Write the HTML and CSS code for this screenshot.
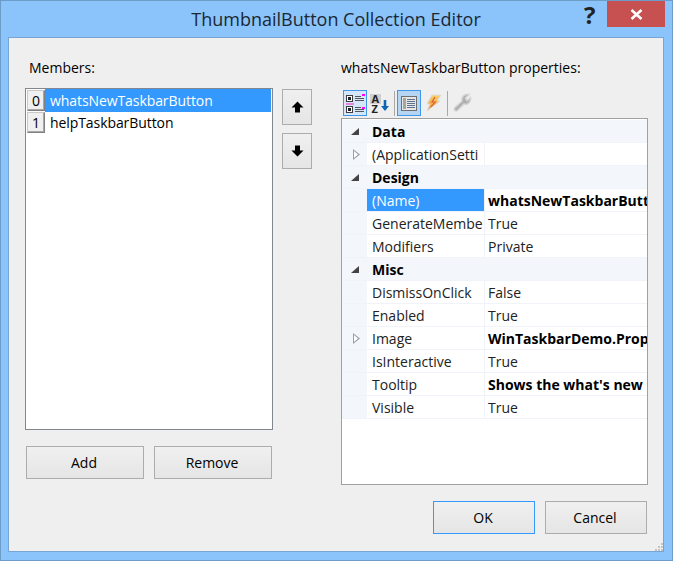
FILE: index.html
```html
<!DOCTYPE html>
<html>
    <head>
        <title>ThumbnailButton Collection Editor</title>
        <link rel="stylesheet" href="styles.css">
    </head>
    <body>
        <div class="window">
            <div class="titlebar">
                <span class="title">ThumbnailButton Collection Editor</span>
                <span class="help">?</span>
                <div class="close">
                    <svg width="13" height="11" viewBox="0 0 13 11"><path d="M1.5 1 L11.5 10 M11.5 1 L1.5 10" stroke="#fff" stroke-width="2.6" fill="none"/></svg>
                </div>
            </div>
            <div class="client">
                <div class="left">
                    <div class="label">Members:</div>
                    <div class="members-row">
                        <div class="listbox">
                            <div class="item selected"><span class="index">0</span><span class="name">whatsNewTaskbarButton</span></div>
                            <div class="item"><span class="index">1</span><span class="name">helpTaskbarButton</span></div>
                        </div>
                        <div class="move">
                            <button class="btn move-btn">
                                <svg width="13" height="12" viewBox="0 0 13 12"><path d="M6.5 0.5 L12.5 6.5 H9 V11.5 H4 V6.5 H0.5 Z" fill="#000"/></svg>
                            </button>
                            <button class="btn move-btn">
                                <svg width="13" height="12" viewBox="0 0 13 12"><path d="M6.5 11.5 L12.5 5.5 H9 V0.5 H4 V5.5 H0.5 Z" fill="#000"/></svg>
                            </button>
                        </div>
                    </div>
                    <div class="add-row">
                        <button class="btn wide">Add</button>
                        <button class="btn wide">Remove</button>
                    </div>
                </div>
                <div class="right">
                    <div class="label">whatsNewTaskbarButton properties:</div>
                    <div class="toolbar">
                        <div class="tool on light">
                            <svg width="20" height="20" viewBox="0 0 20 20">
                                <rect x="1.5" y="2.5" width="6" height="6" fill="#fff" stroke="#3c3c3c"/>
                                <rect x="3" y="4" width="3" height="3" fill="#222"/>
                                <rect x="1.5" y="13.5" width="6" height="6" fill="#fff" stroke="#3c3c3c"/>
                                <rect x="3" y="15" width="3" height="3" fill="#222"/>
                                <path d="M10 3.5H16M10 5.5H19M10 7.5H19M10 14.5H16M10 16.5H19M10 18.5H19" stroke="#555" stroke-width="1"/>
                                <rect x="17" y="1" width="3" height="2" fill="#f0f"/>
                                <rect x="1" y="10" width="8" height="2" fill="#f080e0"/>
                                <rect x="17" y="14" width="3" height="2" fill="#f0f"/>
                            </svg>
                        </div>
                        <div class="tool">
                            <svg class="sort" width="22" height="20" viewBox="0 0 22 20">
                                <rect x="2" y="1" width="11" height="10" fill="#cfcfcf"/>
                                <text x="3.5" y="10" class="az">A</text>
                                <text x="3.5" y="20" class="az">Z</text>
                                <path d="M17 7 V16" stroke="#0f66b5" stroke-width="2.6"/>
                                <path d="M13 13 L17 18 L21 13 Z" fill="#0f66b5"/>
                            </svg>
                        </div>
                        <div class="sep"></div>
                        <div class="tool on">
                            <svg width="16" height="15" viewBox="0 0 16 15">
                                <rect x="0.5" y="0.5" width="15" height="14" fill="#e6e6e6" stroke="#6f6f6f"/>
                                <rect x="2" y="2" width="3" height="11" fill="#a6a69a"/>
                                <path d="M6 3.5H14M6 5.5H14M6 7.5H14M6 9.5H14M6 11.5H14" stroke="#5f7290" stroke-width="1"/>
                            </svg>
                        </div>
                        <div class="tool">
                            <svg width="18" height="18" viewBox="0 0 18 18">
                                <defs>
                                    <linearGradient id="bolt" x1="0" y1="0" x2="0" y2="1">
                                        <stop offset="0" stop-color="#f8d46a"/>
                                        <stop offset="1" stop-color="#ee8a3a"/>
                                    </linearGradient>
                                </defs>
                                <path d="M8 1 H17 L13 7 H16 L3 17 L6 10 H3 Z" fill="url(#bolt)" stroke="#dcdcdc" stroke-width="1"/>
                                <path d="M11 3 L8 8 H11 L7 13" stroke="#d9602a" stroke-width="1.2" fill="none"/>
                            </svg>
                        </div>
                        <div class="sep second"></div>
                        <div class="tool">
                            <svg width="20" height="20" viewBox="0 0 20 20">
                                <path d="M2.5 15 L10 8 C9 3.5 13 0.5 17 1.5 L13.5 5 L15 7.5 L18.5 4.5 C19.5 9 15.5 12.5 12 11 L5.5 17.5 C3.5 19 1.5 17 2.5 15 Z" fill="#aeaeae" stroke="#d6d6d6" stroke-width="1.5"/>
                            </svg>
                        </div>
                    </div>
                    <div class="grid">
                        <div class="row head"><span class="gutter"><i class="open"></i></span><span class="cat">Data</span></div>
                        <div class="row"><span class="gutter"><i class="closed"></i></span><span class="key">(ApplicationSetti</span><span class="val"></span></div>
                        <div class="row head"><span class="gutter"><i class="open"></i></span><span class="cat">Design</span></div>
                        <div class="row"><span class="gutter"></span><span class="key picked">(Name)</span><span class="val bold">whatsNewTaskbarButt</span></div>
                        <div class="row"><span class="gutter"></span><span class="key">GenerateMembe</span><span class="val">True</span></div>
                        <div class="row"><span class="gutter"></span><span class="key">Modifiers</span><span class="val">Private</span></div>
                        <div class="row head"><span class="gutter"><i class="open"></i></span><span class="cat">Misc</span></div>
                        <div class="row"><span class="gutter"></span><span class="key">DismissOnClick</span><span class="val">False</span></div>
                        <div class="row"><span class="gutter"></span><span class="key">Enabled</span><span class="val">True</span></div>
                        <div class="row"><span class="gutter"><i class="closed"></i></span><span class="key">Image</span><span class="val bold">WinTaskbarDemo.Prop</span></div>
                        <div class="row"><span class="gutter"></span><span class="key">IsInteractive</span><span class="val">True</span></div>
                        <div class="row"><span class="gutter"></span><span class="key">Tooltip</span><span class="val bold">Shows the what's new</span></div>
                        <div class="row"><span class="gutter"></span><span class="key">Visible</span><span class="val">True</span></div>
                    </div>
                    <div class="ok-row">
                        <button class="btn ok">OK</button>
                        <button class="btn wide2">Cancel</button>
                    </div>
                </div>
                <svg class="grip" width="8" height="8" viewBox="0 0 8 8">
                    <path d="M6 0h2v2h-2z M3 3h2v2h-2z M6 3h2v2h-2z M0 6h2v2h-2z M3 6h2v2h-2z M6 6h2v2h-2z" fill="#c4c4c4"/>
                </svg>
            </div>
        </div>
    </body>
</html>
```
FILE: styles.css
```css
html, body {
    margin: 0;
    padding: 0;
}

body {
    width: 673px;
    height: 561px;
    overflow: hidden;
    font-family: "Open Sans", "Noto Sans", sans-serif;
    font-size: 14px;
    color: #000;
}

.window {
    box-sizing: border-box;
    width: 673px;
    height: 561px;
    background-color: #8ac4fa;
    border: 1px solid #6e9cc9;
    padding: 0 8px 8px 7px;
    display: flex;
    flex-direction: column;
}

.titlebar {
    height: 36px;
    flex: none;
    display: flex;
    position: relative;
    justify-content: center;
}

.title {
    font-size: 18px;
    line-height: 37px;
    color: #1c2733;
}

.help {
    position: absolute;
    left: 576px;
    top: -3px;
    font-size: 24px;
    font-weight: bold;
    line-height: 33px;
    color: #222;
}

.close {
    position: absolute;
    right: -1px;
    top: 0;
    width: 58px;
    height: 26px;
    background-color: #c75050;
    display: flex;
    align-items: center;
    justify-content: center;
}

.client {
    flex: 1;
    display: flex;
    position: relative;
    background-color: #efefef;
    border: 1px solid #78a6d4;
    padding: 19px 16px 17px 16px;
}

.grip {
    position: absolute;
    right: 0;
    bottom: 0;
}

.left {
    width: 287px;
    margin-right: 29px;
    display: flex;
    flex-direction: column;
}

.right {
    flex: 1;
    display: flex;
    flex-direction: column;
}

.label {
    height: 31px;
    line-height: 22px;
    padding-left: 4px;
}

.right .label {
    padding-left: 0;
    height: 33px;
}

.members-row {
    display: flex;
}

.listbox {
    box-sizing: border-box;
    width: 248px;
    height: 342px;
    background-color: #fff;
    border: 1px solid #82878f;
    padding: 1px 1px 0;
    margin-right: 9px;
}

.item {
    display: flex;
    height: 22px;
    line-height: 22px;
}

.index {
    box-sizing: border-box;
    width: 18px;
    height: 21px;
    flex: none;
    background-color: #f0f0f0;
    border-right: 1px solid #808080;
    border-bottom: 1px solid #808080;
    border-top: 1px solid #c8c8c8;
    border-left: 1px solid #c8c8c8;
    box-shadow: inset -1px -1px 0 #a8a8a8;
    text-align: center;
    line-height: 19px;
}

.name {
    flex: 1;
    padding-left: 5px;
    letter-spacing: -0.08px;
}

.item.selected .name {
    background-color: #3399ff;
    box-shadow: 0 -1px 0 #3399ff;
    color: #fff;
}

.btn {
    box-sizing: border-box;
    font: inherit;
    color: #000;
    padding: 0 2px 0 0;
    border: 1px solid #acacac;
    background: linear-gradient(#f0f0f0, #e5e5e5);
}

.move {
    padding-top: 1px;
    display: flex;
    flex-direction: column;
    gap: 8px;
}

.move-btn {
    width: 30px;
    height: 36px;
    padding: 0;
    display: flex;
    align-items: center;
    justify-content: center;
}

.add-row {
    display: flex;
    gap: 10px;
    margin-top: 16px;
    padding-left: 1px;
}

.wide {
    width: 118px;
    height: 33px;
}

.toolbar {
    display: flex;
    align-items: center;
    height: 26px;
    padding-left: 2px;
    margin-bottom: 2px;
}

.tool {
    box-sizing: border-box;
    width: 24px;
    height: 26px;
    display: flex;
    align-items: center;
    justify-content: center;
    border: 1px solid transparent;
}

.tool.on {
    background-color: #b5d5f3;
    border-color: #3e97ea;
}

.tool.on.light {
    background-color: #d4e6f7;
}

.sep {
    width: 1px;
    height: 25px;
    background-color: #a8a8a8;
    margin: 0 2px 0 3px;
}

.sep.second {
    margin-left: 2px;
}

.sort {
    overflow: visible;
}

.az {
    font-size: 11px;
    font-weight: bold;
    fill: #222;
}

.grid {
    box-sizing: border-box;
    width: 307px;
    height: 367px;
    background-color: #fff;
    border: 1px solid #a0a0a0;
    padding-top: 1px;
    overflow: hidden;
}

.row {
    display: flex;
    box-sizing: border-box;
    height: 23px;
    line-height: 24px;
    border-bottom: 1px solid #f0f3f9;
}

.row.head {
    background-color: #f3f6fb;
}

.gutter {
    box-sizing: border-box;
    width: 25px;
    flex: none;
    background-color: #f3f6fb;
    position: relative;
}

.open {
    position: absolute;
    left: 9px;
    top: 8px;
    width: 0;
    height: 0;
    border-left: 8px solid transparent;
    border-bottom: 7px solid #444;
}

.closed {
    position: absolute;
    left: 11px;
    top: 6px;
    width: 7px;
    height: 11px;
    background: #9aa0a8;
    clip-path: polygon(0 0, 100% 50%, 0 100%);
}

.closed::before {
    content: "";
    position: absolute;
    left: 1px;
    top: 2px;
    width: 4px;
    height: 7px;
    background: #fff;
    clip-path: polygon(0 0, 100% 50%, 0 100%);
}

.cat {
    font-weight: bold;
    padding-left: 5px;
}

.key {
    box-sizing: border-box;
    width: 118px;
    flex: none;
    padding-left: 5px;
    border-right: 1px solid #f0f3f9;
    white-space: nowrap;
    overflow: hidden;
    color: #222;
}

.key.picked {
    background-color: #3399ff;
    color: #fff;
}

.val {
    flex: 1;
    padding-left: 3px;
    white-space: nowrap;
    overflow: hidden;
    color: #222;
}

.bold {
    font-weight: bold;
    color: #000;
}

.ok-row {
    display: flex;
    justify-content: flex-end;
    gap: 10px;
    margin-top: 16px;
    padding-right: 1px;
}

.ok, .wide2 {
    width: 102px;
    height: 33px;
}

.ok {
    border-color: #3399ff;
}
```
